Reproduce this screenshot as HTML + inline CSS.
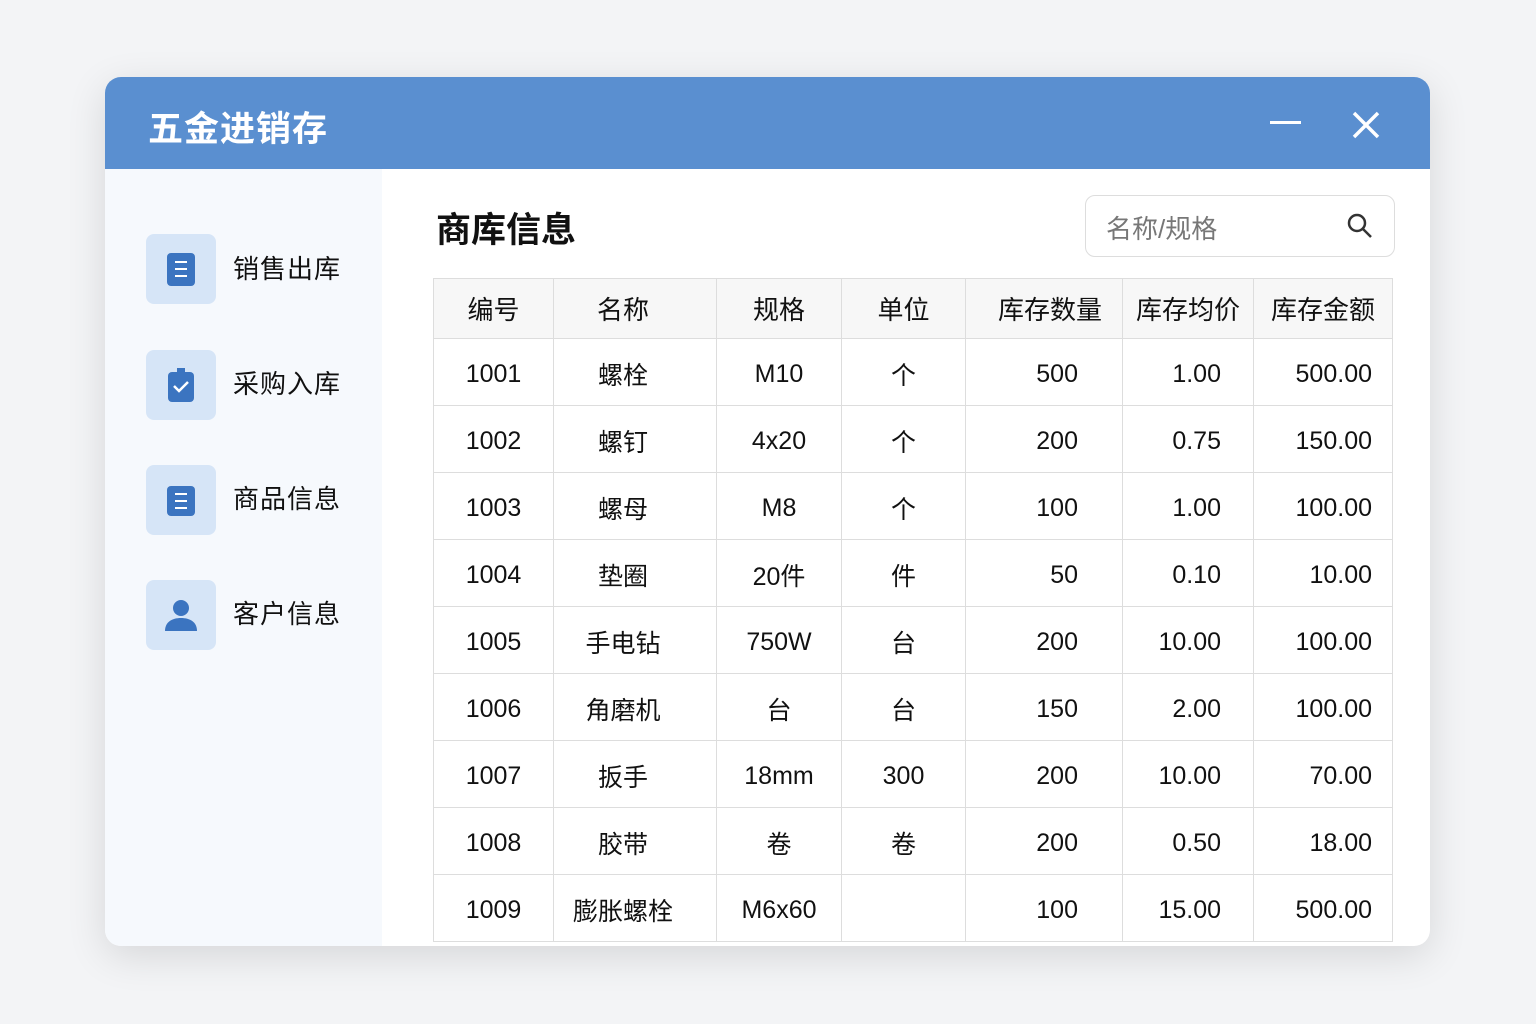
<!DOCTYPE html>
<html><head><meta charset="utf-8"><style>
body{margin:0;width:1536px;height:1024px;background:#f3f4f6;font-family:"Liberation Sans","Noto Sans CJK SC",sans-serif;position:relative;overflow:hidden}
.win{position:absolute;left:105px;top:77px;width:1325px;height:869px;background:#fff;border-radius:16px;overflow:hidden;box-shadow:0 10px 40px rgba(0,0,0,.12)}
.bar{height:92px;background:#5a8fd0;position:relative}
.bar .t{position:absolute;left:43px;top:24px;color:#fff;font-size:35px;font-weight:bold;letter-spacing:1px}
.side{position:absolute;left:0;top:92px;width:277px;bottom:0;background:#f6f9fd}
.item{position:absolute;left:41px;width:70px;height:70px;background:#d6e5f7;border-radius:8px}
.item svg{position:absolute;left:17px;top:17px}
.lbl{position:absolute;left:128px;font-size:26px;color:#111;letter-spacing:1px}
h1{position:absolute;left:331px;top:125px;margin:0;font-size:35px;font-weight:bold;color:#111}
.search{position:absolute;left:980px;top:118px;width:310px;height:62px;border:1px solid #ddd;border-radius:10px;box-sizing:border-box}
.search span{position:absolute;left:20px;top:13px;font-size:26px;color:#777}
table{position:absolute;left:328px;top:201px;border-collapse:collapse;font-size:25px;color:#111}
td,th{border:1px solid #ddd;padding:0;font-weight:normal}
th{height:59px;background:#f7f7f7;font-size:26px}
td{height:62px;text-align:center;padding-top:4px}
td.n{padding-right:24px}
td.r{text-align:right;padding-right:20px}
td.q{text-align:right;padding-right:44px}
td.p{text-align:right;padding-right:32px}
</style></head><body>
<div class="win">
<div class="bar"><div class="t">五金进销存</div>
<div style="position:absolute;left:1165px;top:44px;width:31px;height:3px;background:#fff"></div>
<svg style="position:absolute;left:1246px;top:33px" width="30" height="30"><path d="M3 3L27 27M27 3L3 27" stroke="#fff" stroke-width="3.5"/></svg>
</div>
<div class="side">
<div class="item" style="top:65px"><svg width="36" height="36"><rect x="4" y="2" width="28" height="33" rx="4" fill="#3b74c0"/><path d="M12 11h12M12 18h12M12 25h12" stroke="#fff" stroke-width="2"/></svg></div>
<div class="lbl" style="top:80px">销售出库</div>
<div class="item" style="top:181px"><svg width="36" height="36"><rect x="5" y="5" width="26" height="30" rx="4" fill="#3b74c0"/><rect x="14" y="1" width="8" height="6" fill="#3b74c0"/><path d="M11 19l5 5 9-9" stroke="#fff" stroke-width="2.5" fill="none"/></svg></div>
<div class="lbl" style="top:195px">采购入库</div>
<div class="item" style="top:296px"><svg width="36" height="36"><rect x="4" y="4" width="28" height="30" rx="4" fill="#3b74c0"/><path d="M12 12h12M12 19h12M12 26h12" stroke="#fff" stroke-width="2"/></svg></div>
<div class="lbl" style="top:310px">商品信息</div>
<div class="item" style="top:411px"><svg width="36" height="36"><circle cx="18" cy="11" r="8" fill="#3b74c0"/><path d="M2 34c0-9 7-13 16-13s16 4 16 13z" fill="#3b74c0"/></svg></div>
<div class="lbl" style="top:425px">客户信息</div>
</div>
<h1>商库信息</h1>
<div class="search"><span>名称/规格</span><svg style="position:absolute;left:260px;top:16px" width="28" height="28"><circle cx="11" cy="11" r="8" stroke="#333" stroke-width="2.5" fill="none"/><path d="M17 17l8 8" stroke="#333" stroke-width="2.5"/></svg></div>
<table>
<tr><th style="width:119px">编号</th><th style="width:163px;padding-right:24px;box-sizing:border-box">名称</th><th style="width:124px">规格</th><th style="width:123px">单位</th><th style="width:157px;text-align:right;padding-right:20px;box-sizing:border-box">库存数量</th><th style="width:130px">库存均价</th><th style="width:138px">库存金额</th></tr>
<tr><td>1001</td><td class="n">螺栓</td><td>M10</td><td>个</td><td class="q">500</td><td class="p">1.00</td><td class="r">500.00</td></tr>
<tr><td>1002</td><td class="n">螺钉</td><td>4x20</td><td>个</td><td class="q">200</td><td class="p">0.75</td><td class="r">150.00</td></tr>
<tr><td>1003</td><td class="n">螺母</td><td>M8</td><td>个</td><td class="q">100</td><td class="p">1.00</td><td class="r">100.00</td></tr>
<tr><td>1004</td><td class="n">垫圈</td><td>20件</td><td>件</td><td class="q">50</td><td class="p">0.10</td><td class="r">10.00</td></tr>
<tr><td>1005</td><td class="n">手电钻</td><td>750W</td><td>台</td><td class="q">200</td><td class="p">10.00</td><td class="r">100.00</td></tr>
<tr><td>1006</td><td class="n">角磨机</td><td>台</td><td>台</td><td class="q">150</td><td class="p">2.00</td><td class="r">100.00</td></tr>
<tr><td>1007</td><td class="n">扳手</td><td>18mm</td><td>300</td><td class="q">200</td><td class="p">10.00</td><td class="r">70.00</td></tr>
<tr><td>1008</td><td class="n">胶带</td><td>卷</td><td>卷</td><td class="q">200</td><td class="p">0.50</td><td class="r">18.00</td></tr>
<tr><td>1009</td><td class="n">膨胀螺栓</td><td>M6x60</td><td></td><td class="q">100</td><td class="p">15.00</td><td class="r">500.00</td></tr>
</table>
</div>
</body></html>
